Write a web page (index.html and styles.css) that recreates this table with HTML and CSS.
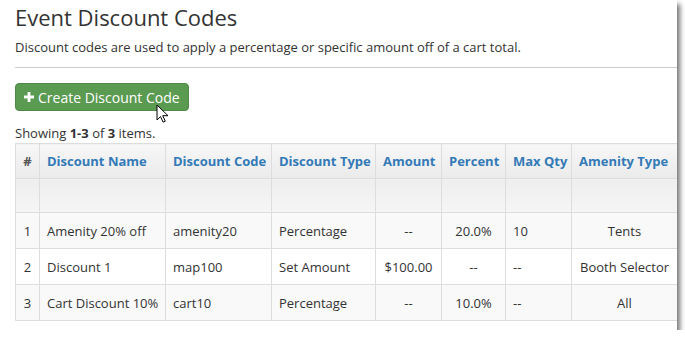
FILE: index.html
```html
<!DOCTYPE html>
<html lang="en">
<head>
    <meta charset="UTF-8">
    <meta name="viewport" content="width=device-width, initial-scale=1.0">
    <link rel="stylesheet" href="styles.css">
    <title>Event Discount Codes</title>
</head>
<body>
    <div class="sheet">
        <h1>Event Discount Codes</h1>
        <p class="lead">Discount codes are used to apply a percentage or specific amount off of a cart total.</p>
        <hr>

        <div class="actions">
            <button type="button" class="btn-create">
                <svg class="plus" viewBox="0 0 10 10" width="10" height="10"><path d="M3.6 0h2.8v3.6H10v2.8H6.4V10H3.6V6.4H0V3.6h3.6z" fill="#fff"/></svg>
                Create Discount Code
            </button>
            <svg class="cursor" viewBox="0 0 12 19" width="12" height="19">
                <path d="M1 1v15l3.5-3.4 2.6 5.6 2.2-1-2.6-5.5H12z" fill="#fff" stroke="#000" stroke-width="1" stroke-linejoin="round"/>
            </svg>
        </div>

        <div class="summary">Showing <b>1-3</b> of <b>3</b> items.</div>

        <table class="grid">
            <colgroup>
                <col style="width:24px">
                <col style="width:126px">
                <col style="width:106px">
                <col style="width:104px">
                <col style="width:66px">
                <col style="width:64px">
                <col style="width:66px">
                <col style="width:106px">
            </colgroup>
            <thead>
                <tr class="heads">
                    <th class="num">#</th>
                    <th><a href="#">Discount Name</a></th>
                    <th><a href="#">Discount Code</a></th>
                    <th><a href="#">Discount Type</a></th>
                    <th><a href="#">Amount</a></th>
                    <th><a href="#">Percent</a></th>
                    <th><a href="#">Max Qty</a></th>
                    <th><a href="#">Amenity Type</a></th>
                </tr>
                <tr class="filters">
                    <td></td><td></td><td></td><td></td><td></td><td></td><td></td><td></td>
                </tr>
            </thead>
            <tbody>
                <tr>
                    <td>1</td>
                    <td>Amenity 20% off</td>
                    <td>amenity20</td>
                    <td>Percentage</td>
                    <td class="mid">--</td>
                    <td class="mid">20.0%</td>
                    <td>10</td>
                    <td class="mid">Tents</td>
                </tr>
                <tr>
                    <td>2</td>
                    <td>Discount 1</td>
                    <td>map100</td>
                    <td>Set Amount</td>
                    <td class="mid">$100.00</td>
                    <td class="mid">--</td>
                    <td>--</td>
                    <td class="mid">Booth Selector</td>
                </tr>
                <tr>
                    <td>3</td>
                    <td>Cart Discount 10%</td>
                    <td>cart10</td>
                    <td>Percentage</td>
                    <td class="mid">--</td>
                    <td class="mid">10.0%</td>
                    <td>--</td>
                    <td class="mid">All</td>
                </tr>
            </tbody>
        </table>
    </div>
</body>
</html>
```

FILE: styles.css
```css
body {
    font-family: 'Open Sans', 'Liberation Sans', sans-serif;
    background: #fff;
    color: #333;
    margin: 0;
    padding: 0;
}

.sheet {
    width: 677px;
    height: 330px;
    background: #fff;
    overflow: hidden;
    box-shadow: 3px 4px 5px rgba(0, 0, 0, 0.55);
    padding-left: 15px;
    box-sizing: border-box;
}

h1 {
    font-size: 22px;
    font-weight: 400;
    margin: 0;
    padding-top: 3px;
    line-height: 28px;
    color: #333;
}

.lead {
    font-size: 13px;
    margin: 7px 0 0;
    line-height: 18px;
}

hr {
    border: 0;
    border-top: 1px solid #ccc;
    margin: 11px 0 0;
}

.actions {
    position: relative;
    margin-top: 15px;
    height: 28px;
}

.btn-create {
    font-family: inherit;
    font-size: 14px;
    color: #fff;
    background: #5b9a51;
    border: 1px solid #4e8a46;
    border-radius: 4px;
    height: 28px;
    width: 174px;
    padding: 0 0 0 8px;
    display: flex;
    align-items: center;
    gap: 4px;
    cursor: pointer;
}

.cursor {
    position: absolute;
    left: 141px;
    top: 21px;
}

.summary {
    font-size: 13px;
    margin-top: 13px;
    line-height: 18px;
}

.grid {
    border-collapse: collapse;
    table-layout: fixed;
    width: 662px;
    font-size: 13px;
    margin-top: 1px;
}

.grid th,
.grid td {
    border: 1px solid #ddd;
    padding: 0 7px;
    text-align: left;
    white-space: nowrap;
    overflow: hidden;
}

.grid .heads th {
    height: 34px;
    background: linear-gradient(#f7f7f7, #ebebeb);
    font-weight: 700;
}

.grid .heads th a {
    color: #337ab7;
    text-decoration: none;
}

.grid .heads th.num {
    color: #555;
    text-align: center;
    padding: 0;
}

.grid .filters td {
    height: 33px;
    background: linear-gradient(#eeeeee, #f5f5f5);
}

.grid tbody td {
    height: 35px;
}

.grid tbody tr:nth-child(odd) td {
    background: #f9f9f9;
}

.grid tbody td:first-child {
    text-align: center;
    padding: 0;
}

.grid td.mid {
    text-align: center;
}
```
